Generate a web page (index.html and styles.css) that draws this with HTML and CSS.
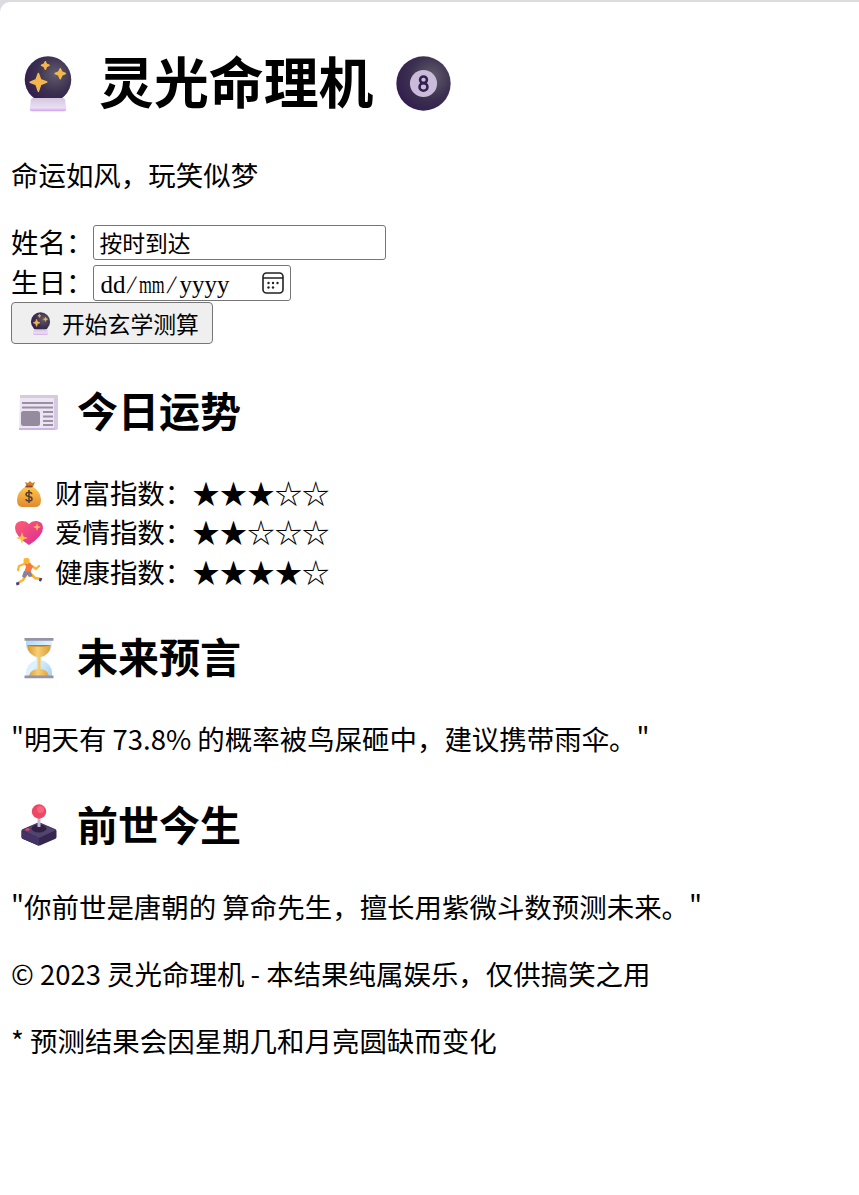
FILE: index.html
```html
<!DOCTYPE html>
<html lang="zh">
<head>
  <meta charset="UTF-8">
  <title>灵光命理机</title>
  <link rel="stylesheet" href="styles.css">
</head>
<body>

  <svg class="defs" width="0" height="0">
    <defs>
      <radialGradient id="orb" cx="65%" cy="38%" r="65%">
        <stop offset="0" stop-color="#625c6d"/>
        <stop offset=".6" stop-color="#3c3150"/>
        <stop offset="1" stop-color="#34204f"/>
      </radialGradient>
      <linearGradient id="base" x2="0" y2="1">
        <stop offset="0" stop-color="#d2c7de"/>
        <stop offset=".75" stop-color="#eadff3"/>
        <stop offset="1" stop-color="#cfa0ee"/>
      </linearGradient>
      <linearGradient id="gold" x2="0" y2="1">
        <stop offset="0" stop-color="#ffc94f"/>
        <stop offset="1" stop-color="#e08a2c"/>
      </linearGradient>
      <linearGradient id="sand">
        <stop offset="0" stop-color="#d9962f"/>
        <stop offset=".45" stop-color="#f7cf72"/>
        <stop offset="1" stop-color="#dc9c35"/>
      </linearGradient>
      <linearGradient id="pink" x2="1" y2="1">
        <stop offset="0" stop-color="#ff5d70"/>
        <stop offset="1" stop-color="#d92b9b"/>
      </linearGradient>
      <linearGradient id="glass" x2="1" y2="1">
        <stop offset="0" stop-color="#a9d8f7"/>
        <stop offset=".5" stop-color="#dff3ff"/>
        <stop offset="1" stop-color="#a4d3f6"/>
      </linearGradient>
      <symbol id="crystal-ball" viewBox="0 0 32 32">
        <circle cx="16" cy="13.500" r="13.300" fill="url(#orb)"/>
        <path d="M7.500 24h17q1.500 0 1.500 3l.4 3q.2 1.500-1.300 1.500H6.900q-1.500 0-1.300-1.500l.4-3q0-3 1.500-3z" fill="url(#base)"/>
        <path d="M10.500 10l1.300 3.600 3.500 1.300-3.500 1.400-1.300 3.900-1.300-3.900L5.800 15l3.400-1.400zM23 7.300l.9 1.900 2 .8-2 .9-.9 2.100-.9-2.100-2-.9 2-.8zM14.500 3.300l.6 1.400 1.500.6-1.500.7-.6 1.500-.7-1.500-1.500-.7 1.500-.6z" fill="#f4b64d" stroke="#f4b64d" stroke-width=".9" stroke-linejoin="round"/>
      </symbol>
    </defs>
  </svg>

  <h1>
    <svg class="icon-ball"><use href="#crystal-ball"/></svg>
    <span>灵光命理机</span>
    <svg class="icon-eight" viewBox="0 0 32 32">
      <circle cx="16" cy="16" r="15.800" fill="url(#orb)"/>
      <circle cx="16" cy="16" r="7.900" fill="#c9bbd9"/>
      <ellipse cx="16" cy="13.800" rx="2" ry="1.900" fill="none" stroke="#34204f" stroke-width="1.500"/>
      <ellipse cx="16" cy="18" rx="2.300" ry="2.200" fill="none" stroke="#34204f" stroke-width="1.500"/>
    </svg>
  </h1>

  <p>命运如风，玩笑似梦</p>

  <form>
    <div class="row">
      <label for="name">姓名：</label>
      <input id="name" class="name-input" type="text" value="按时到达">
    </div>
    <div class="row">
      <span class="label">生日：</span>
      <span class="date-input">
        <span>dd</span><span class="slash">/</span><span class="month">mm</span><span class="slash">/</span><span>yyyy</span>
        <svg class="calendar" viewBox="0 0 22 22">
          <rect x="1" y="1" width="20" height="20" rx="3.500" fill="none" stroke="#222" stroke-width="1.600"/>
          <path d="M1 6h20" stroke="#222" stroke-width="1.500"/>
          <g fill="#222">
            <circle cx="6.500" cy="11" r="1.200"/><circle cx="11" cy="11" r="1.200"/><circle cx="15.500" cy="11" r="1.200"/>
            <circle cx="6.500" cy="15.500" r="1.200"/><circle cx="11" cy="15.500" r="1.200"/>
          </g>
        </svg>
      </span>
    </div>
    <button type="button"><svg class="icon-button"><use href="#crystal-ball"/></svg>开始玄学测算</button>
  </form>

  <h2>
    <svg class="icon-h2" viewBox="0 0 42 42">
      <path d="M4 4h35q1 0 1 1v32q0 2-2 2H3z" fill="#d6cae2"/>
      <path d="M2 4h34v35H3q-2 0-2-2z" fill="#ece5f2"/>
      <path d="M2 4h34v3H2z" fill="#d5cbdc"/>
      <path d="M1 37h36v2H1z" fill="#cdb4e4"/>
      <path d="M4 12h31M4 16.500h31M25 21h10M25 25.500h10M25 30h10M25 34h10" stroke="#9b8fa5" stroke-width="1.800"/>
      <rect x="3" y="20" width="19" height="15" rx="2.500" fill="#958b9e"/>
    </svg>
    <span>今日运势</span>
  </h2>
  <div class="scores">
    <div class="score">
      <svg class="icon" viewBox="0 0 28 28">
        <path d="M10 2l3 1 2-2 2 2 3-1-2 5h-6z" fill="#d87c22"/>
        <path d="M11 6h6q9 6 9 14 0 7-5 7H7q-5 0-5-7 0-8 9-14z" fill="url(#gold)"/>
        <path d="M10.500 6.500h7" stroke="#7b4738" stroke-width="1.800"/>
        <path d="M17 14q-.5-1.800-3-1.800t-3 2q0 1.800 3 2.300t3 2.500-3 2-3-2M14 10v13" fill="none" stroke="#593b31" stroke-width="1.500"/>
      </svg>
      <span>财富指数：★★★☆☆</span>
    </div>
    <div class="score">
      <svg class="icon" viewBox="0 0 28 28">
        <path d="M14 26Q0 17 0 9q0-6.500 6.500-7Q11 1.500 14 5q3-3.500 7.500-3Q28 2.500 28 9q0 8-14 17z" fill="url(#pink)"/>
        <path d="M7 13l1.500 4.500L13 19l-4.500 1.500L7 25l-1.500-4.500L1 19l4.500-1.500zM22 4l1 3 3 1-3 1-1 3-1-3-3-1 3-1z" fill="#ffc14d"/>
      </svg>
      <span>爱情指数：★★☆☆☆</span>
    </div>
    <div class="score">
      <svg class="icon" viewBox="0 0 28 28">
        <path d="M9 6L4 8l-1 4M17 8l4 3 3-3" fill="none" stroke="#fdb52d" stroke-width="2.300" stroke-linecap="round" stroke-linejoin="round"/>
        <path d="M16 16l4 4 6 1M11 17l-3 5-5 3" fill="none" stroke="#fdb52d" stroke-width="2.500" stroke-linejoin="round"/>
        <path d="M9 5l6-.5 3 4-2.500 5.500-6-.5 1.500-5z" fill="#f37a3f"/>
        <path d="M9 13l7 .5 1.500 5-3.500.5-1.500-2-3 3-2.500-1.500z" fill="#89819c"/>
        <rect x="8.500" y="0" width="6" height="6" rx="2" fill="#fdb52d"/>
        <path d="M24.500 20l3 .2-1.500 3.300-2-.5zM1 24.500l3-.5.500 2.500-3 1z" fill="#4b3b78"/>
      </svg>
      <span>健康指数：★★★★☆</span>
    </div>
  </div>

  <h2>
    <svg class="icon-h2" viewBox="0 0 42 42">
      <path d="M8 3h26v4q0 9-10 13v3q10 4 10 13v3H8v-3q0-9 10-13v-3Q8 16 8 7z" fill="url(#glass)"/>
      <path d="M9 8h24q-1 10-10.500 12v12q7.500 1 8.500 7H11q1-6 8.500-7V20Q10 18 9 8z" fill="url(#sand)"/>
      <path d="M9.500 8h23q-3 1.500-11.500 1.500T9.500 8z" fill="#b9781f"/>
      <path d="M6.500 1h29v2.800h-29zM6.500 38.500h29v2.800h-29z" fill="#9893a3"/>
    </svg>
    <span>未来预言</span>
  </h2>
  <p>"明天有 73.8% 的概率被鸟屎砸中，建议携带雨伞。"</p>

  <h2>
    <svg class="icon-h2" viewBox="0 0 42 42">
      <path d="M5 25l14-6q2-1 4 0l14 6q1.500.7 1.500 2v6q0 1.500-1.500 2l-14 6q-2 1-4 0L5 35q-1.500-.5-1.500-2v-6q0-1.300 1.500-2z" fill="#35264f"/>
      <path d="M4 26l15-6.500q2-1 4 0L38 26l-17 8z" fill="#51446f"/>
      <path d="M3.600 26.500L21 34v7.500q-1 0-2-.5L5 35q-1.500-.5-1.500-2z" fill="#443466"/>
      <ellipse cx="21" cy="24.500" rx="7.500" ry="4" fill="#302144"/>
      <path d="M21 13v10" stroke="#c2b8d0" stroke-width="3"/>
      <circle cx="21" cy="7.500" r="7.200" fill="#ef4766"/>
      <circle cx="22.500" cy="5.500" r="3.500" fill="#f7667c"/>
      <ellipse cx="9.500" cy="25.500" rx="2.200" ry="1.300" fill="#f1435d"/>
    </svg>
    <span>前世今生</span>
  </h2>
  <p>"你前世是唐朝的 算命先生，擅长用紫微斗数预测未来。"</p>
  <p>© 2023 灵光命理机 - 本结果纯属娱乐，仅供搞笑之用</p>
  <p>* 预测结果会因星期几和月亮圆缺而变化</p>

</body>
</html>
```
FILE: styles.css
```css
html {
  background-color: #dcdce0;
}

body {
  box-sizing: border-box;
  min-height: 1193px;
  margin: 2px 0 0;
  padding: 38px 11px 0;
  background-color: white;
  border-top-left-radius: 10px;
  color: black;
  font-family: "Noto Sans CJK SC", sans-serif;
  font-size: 27.46px;
  line-height: 39.4px;
  white-space: nowrap;
}

.defs {
  display: block;
}

h1, h2 {
  display: flex;
  align-items: center;
  font-weight: bold;
}

h1 {
  margin: 0;
  font-size: 54.9px;
  line-height: 79px;
}

h2 {
  margin: 34px 0;
  font-size: 41px;
  line-height: 60.4px;
}

p {
  margin: 27.4px 0;
}

h1 + p {
  margin: 35.5px 0 29.4px;
}

form {
  margin-bottom: 34.8px;
}

.icon-ball {
  width: 56px;
  height: 56px;
  margin: 8px 23px 0 9px;
}

.icon-eight {
  width: 55px;
  height: 55px;
  margin: 8px 0 0 23px;
}

.icon-h2 {
  width: 42px;
  height: 42px;
  margin: 5px 17px 0 7px;
}

.row {
  display: flex;
  align-items: center;
  height: 39.4px;
}

label, .label {
  margin-bottom: 2px;
}

.name-input, .date-input {
  box-sizing: border-box;
  border: 1.5px solid #767676;
  border-radius: 3px;
  background-color: white;
  color: black;
}

.name-input {
  width: 293px;
  height: 35px;
  padding: 1px 5px;
  font-family: inherit;
  font-size: 22.8px;
}

.date-input {
  display: flex;
  align-items: center;
  width: 198px;
  height: 36px;
  margin-top: 2px;
  padding: 0 6px;
  font-family: "Liberation Serif", serif;
  font-size: 25px;
}

.date-input span {
  padding-top: 3px;
}

.slash {
  width: 14px;
  text-align: center;
  transform: skewX(-12deg);
}

/* squeezed to the same width as the other letters */
.month {
  width: 26px;
  transform: scaleX(0.66);
  transform-origin: left;
}

.calendar {
  width: 22px;
  height: 22px;
  margin-left: auto;
}

button {
  display: flex;
  align-items: center;
  box-sizing: border-box;
  width: 202px;
  height: 42px;
  padding: 0 0 0 17px;
  border: 1.5px solid #767676;
  border-radius: 4px;
  background-color: #efefef;
  color: black;
  font-family: inherit;
  font-size: 22.8px;
}

.icon-button {
  width: 23px;
  height: 23px;
  margin-right: 10px;
}

.score {
  display: flex;
  align-items: center;
  height: 39.2px;
}

.icon {
  width: 28px;
  height: 28px;
  margin: 2px 12px 0 4px;
}
```
